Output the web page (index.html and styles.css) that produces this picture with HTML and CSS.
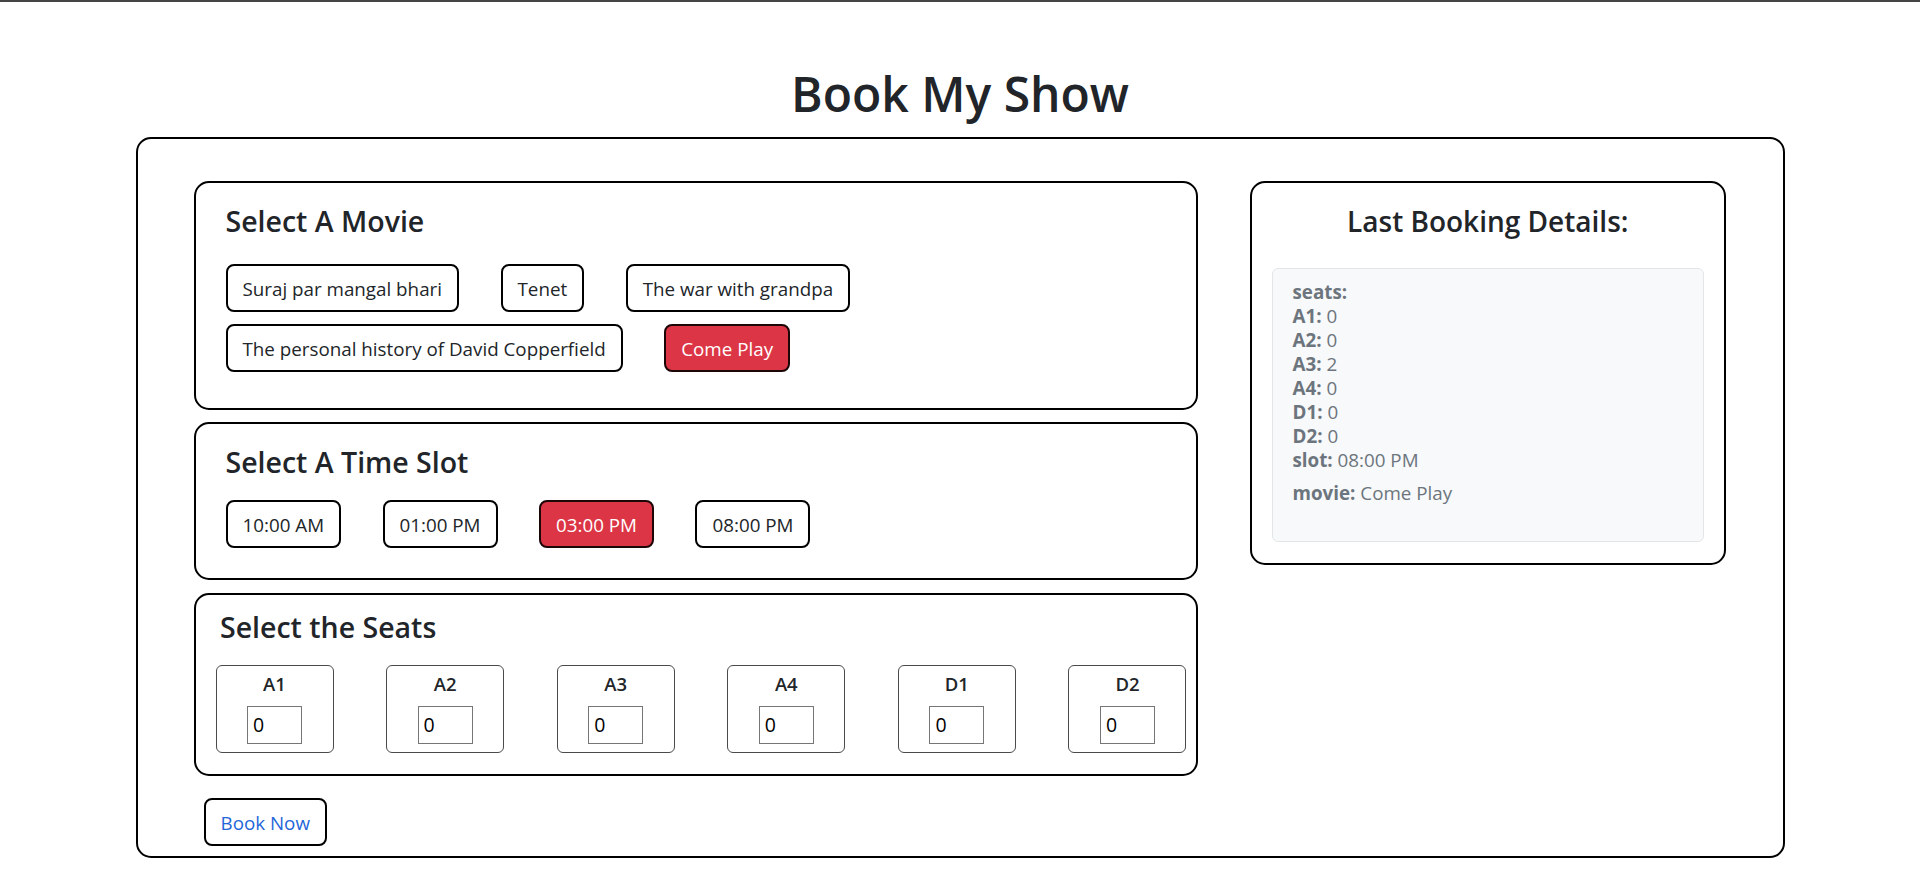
FILE: index.html
```html
<!DOCTYPE html>
<html lang="en">
<head>
<meta charset="utf-8">
<title>Book My Show</title>
<link rel="stylesheet" href="styles.css">
</head>
<body>
<div class="page">
  <h1 class="title">Book My Show</h1>
  <div class="wrapper">
    <div class="layout">
      <div class="left-col">
        <section class="card card-movie">
          <h3 class="card-title">Select A Movie</h3>
          <div class="btn-list">
            <button class="opt">Suraj par mangal bhari</button>
            <button class="opt">Tenet</button>
            <button class="opt">The war with grandpa</button>
            <button class="opt">The personal history of David Copperfield</button>
            <button class="opt active">Come Play</button>
          </div>
        </section>
        <section class="card card-slot">
          <h3 class="card-title">Select A Time Slot</h3>
          <div class="btn-list">
            <button class="opt">10:00 AM</button>
            <button class="opt">01:00 PM</button>
            <button class="opt active">03:00 PM</button>
            <button class="opt">08:00 PM</button>
          </div>
        </section>
        <section class="card card-seats">
          <h3 class="card-title seats-title">Select the Seats</h3>
          <div class="seat-row">
            <div class="seat"><span class="seat-name">A1</span><input class="seat-input" type="number" value="0"></div>
            <div class="seat"><span class="seat-name">A2</span><input class="seat-input" type="number" value="0"></div>
            <div class="seat"><span class="seat-name">A3</span><input class="seat-input" type="number" value="0"></div>
            <div class="seat"><span class="seat-name">A4</span><input class="seat-input" type="number" value="0"></div>
            <div class="seat"><span class="seat-name">D1</span><input class="seat-input" type="number" value="0"></div>
            <div class="seat"><span class="seat-name">D2</span><input class="seat-input" type="number" value="0"></div>
          </div>
        </section>
      </div>
      <aside class="card card-last">
        <h3 class="last-title">Last Booking Details:</h3>
        <div class="last-box">
          <div class="last-seats">
            <div class="line"><b>seats:</b></div>
            <div class="line"><b>A1:</b> 0</div>
            <div class="line"><b>A2:</b> 0</div>
            <div class="line"><b>A3:</b> 2</div>
            <div class="line"><b>A4:</b> 0</div>
            <div class="line"><b>D1:</b> 0</div>
            <div class="line"><b>D2:</b> 0</div>
            <div class="line"><b>slot:</b> 08:00 PM</div>
          </div>
          <div class="line movie-line"><b>movie:</b> Come Play</div>
        </div>
      </aside>
    </div>
    <button class="book-btn">Book Now</button>
  </div>
</div>
</body>
</html>
```
FILE: styles.css
```css
* { box-sizing: border-box; }

html, body {
  margin: 0;
  background: #fff;
}

body {
  font-family: "Open Sans", "Noto Sans", sans-serif;
  color: #212529;
}

.page {
  border-top: 2px solid #454545;
  padding-top: 62px;
}

.title {
  margin: 0 0 13px;
  text-align: center;
  font-size: 48px;
  font-weight: 600;
  line-height: 60px;
  color: #212529;
}

.wrapper {
  width: 1649px;
  margin: 0 auto;
  border: 2px solid #000;
  border-radius: 15px;
  padding: 42px 57px 10px 56px;
}

.layout {
  display: grid;
  grid-template-columns: 1004px 476px;
  column-gap: 52px;
  align-items: start;
}

.left-col {
  display: flex;
  flex-direction: column;
}

.card {
  border: 2px solid #000;
  border-radius: 15px;
  background: #fff;
}

.card-title {
  margin: 0;
  font-size: 28.5px;
  font-weight: 600;
  line-height: 34.8px;
  color: #212529;
}

.card-movie {
  padding: 21px 30px 36px;
}
.card-movie .card-title { margin-bottom: 25px; }

.card-slot {
  margin-top: 12px;
  padding: 21px 30px 30px;
}
.card-slot .card-title { margin-bottom: 20px; }

.card-seats {
  margin-top: 13px;
  padding: 15px 9px 21px 20px;
}
.seats-title {
  margin-left: 4.5px;
  margin-bottom: 21px;
}

.btn-list {
  display: flex;
  flex-wrap: wrap;
  column-gap: 41.5px;
  row-gap: 12px;
}

.opt,
.book-btn {
  height: 48px;
  padding: 3px 15px 0;
  border: 2px solid #000;
  border-radius: 8px;
  background: #fff;
  color: #212529;
  font-family: "Open Sans", "Noto Sans", sans-serif;
  font-size: 18.8px;
  font-weight: 400;
  line-height: 1;
  cursor: pointer;
}

.opt.active {
  background: #dc3545;
  border-color: #1c0608;
  color: #fff;
}

.seat-row {
  display: flex;
  justify-content: space-between;
}

.seat {
  width: 118px;
  height: 87.3px;
  border: 1px solid #4a4a4a;
  border-radius: 6px;
  padding-top: 7px;
  display: flex;
  flex-direction: column;
  align-items: center;
}

.seat-name {
  display: block;
  font-size: 18.5px;
  font-weight: 600;
  line-height: 22px;
  color: #212529;
}

.seat-input {
  margin-top: 10.3px;
  width: 55px;
  height: 38px;
  padding: 0 5px;
  border: 1px solid #767676;
  border-radius: 0;
  font-family: "Open Sans", "Noto Sans", sans-serif;
  font-size: 19.5px;
  color: #000;
  -moz-appearance: textfield;
}
.seat-input::-webkit-inner-spin-button,
.seat-input::-webkit-outer-spin-button {
  -webkit-appearance: none;
  margin: 0;
}

.card-last {
  padding: 20.5px 19.5px 21px 20px;
}

.last-title {
  margin: 0 0 30.3px;
  text-align: center;
  font-size: 28px;
  font-weight: 600;
  line-height: 34.2px;
  color: #212529;
}

.last-box {
  height: 274px;
  background: #f8f9fa;
  border: 1px solid #e3e6e9;
  border-radius: 6px;
  padding: 11.4px 20px 0;
  color: #6c757d;
  font-size: 18.8px;
  line-height: 24px;
}

.last-box b { font-weight: 700; }

.movie-line { margin-top: 8.3px; }

.book-btn {
  margin: 22px 0 0 10px;
  color: #1f66d9;
}
```
